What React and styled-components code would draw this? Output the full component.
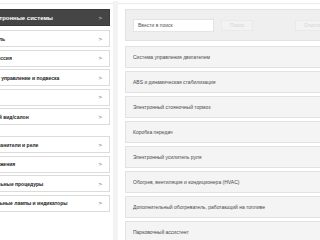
import React from "react";
import styled, { createGlobalStyle } from "styled-components";

const Global = createGlobalStyle`
  html, body { margin: 0; padding: 0; background: #fff; overflow: hidden; }
  body { font-family: "Liberation Sans", Arial, sans-serif; }
`;

const Page = styled.div`
  width: 320px;
  height: 240px;
  overflow: hidden;
  padding-top: 3px;
  box-sizing: border-box;
`;

const TopLine = styled.div`
  height: 1px;
  background: #ececec;
`;

const Body = styled.div`
  display: flex;
  margin-top: 5px;
`;

const LeftCol = styled.div`
  width: 113px;
  flex: none;
  overflow: hidden;
`;

const LeftInner = styled.div`
  margin-left: -28px;
  width: 138px;
  display: flex;
  flex-direction: column;
`;

const Group = styled.div`
  display: flex;
  flex-direction: column;
  gap: 2.5px;
  margin-bottom: ${(p) => p.$mb || 0}px;
`;

const NavItem = styled.div`
  box-sizing: border-box;
  height: 17px;
  display: flex;
  align-items: center;
  justify-content: space-between;
  padding: 0 7px 0 ${(p) => (p.$active ? 12 : 6)}px;
  background: ${(p) => (p.$active ? "#454545" : "#fff")};
  border: 1px solid ${(p) => (p.$active ? "#3a3a3a" : "#dcdcdc")};
  color: ${(p) => (p.$active ? "#fff" : "#222")};
  font-size: ${(p) => (p.$active ? 6 : 5)}px;
  font-weight: bold;
  white-space: nowrap;
  margin-bottom: ${(p) => (p.$active ? 4 : 0)}px;
`;

const Chevron = styled.span`
  font-size: 6px;
  font-weight: normal;
  color: ${(p) => (p.$active ? "#ddd" : "#666")};
`;

const Track = styled.div`
  width: 5px;
  flex: none;
  background: #f3f3f3;
  height: 240px;
  margin-top: -8px;
`;

const RightCol = styled.div`
  flex: none;
  width: 210px;
  margin-left: 7px;
  display: flex;
  flex-direction: column;
`;

const SearchBar = styled.div`
  box-sizing: border-box;
  height: 32px;
  background: #efefef;
  border: 1px solid #e2e2e2;
  border-right: none;
  display: flex;
  align-items: center;
  padding-left: 7px;
  margin-bottom: 5px;
`;

const Input = styled.div`
  box-sizing: border-box;
  width: 83px;
  height: 13px;
  background: #fff;
  border: 1px solid #e4e4e4;
  font-size: 5px;
  color: #555;
  display: flex;
  align-items: center;
  padding-left: 4px;
  margin-right: 7px;
`;

const Btn = styled.div`
  box-sizing: border-box;
  width: ${(p) => p.$w}px;
  height: 11px;
  border: 1px solid #e9e9e9;
  background: #f2f2f2;
  color: #d4d4d4;
  font-size: 5px;
  display: flex;
  align-items: center;
  justify-content: center;
  margin-right: ${(p) => p.$mr || 0}px;
  flex: none;
`;

const List = styled.div`
  display: flex;
  flex-direction: column;
  gap: 3px;
`;

const Row = styled.div`
  box-sizing: border-box;
  height: 22px;
  background: #f4f4f4;
  border: 1px solid #e2e2e2;
  border-right: none;
  display: flex;
  align-items: center;
  padding-left: 7px;
  font-size: 5px;
  color: #4a4a4a;
  white-space: nowrap;
`;

const group1 = [
  "Двигатель",
  "Трансмиссия",
  "Рулевое управление и подвеска",
  "Тормоза",
  "Внешний вид/салон",
];
const group2 = [
  "Предохранители и реле",
  "Расположения",
  "Специальные процедуры",
  "Контрольные лампы и индикаторы",
];
const rows = [
  "Система управления двигателем",
  "ABS и динамическая стабилизация",
  "Электронный стояночный тормоз",
  "Коробка передач",
  "Электронный усилитель руля",
  "Обогрев, вентиляция и кондиционера (HVAC)",
  "Дополнительный обогреватель, работающий на топливе",
  "Парковочный ассистент",
];

export default function App() {
  return (
    <Page>
      <Global />
      <TopLine />
      <Body>
        <LeftCol>
          <LeftInner>
            <NavItem $active>
              Электронные системы <Chevron $active>&gt;</Chevron>
            </NavItem>
            <Group $mb={11}>
              {group1.map((t) => (
                <NavItem key={t}>
                  {t} <Chevron>&gt;</Chevron>
                </NavItem>
              ))}
            </Group>
            <Group>
              {group2.map((t) => (
                <NavItem key={t}>
                  {t} <Chevron>&gt;</Chevron>
                </NavItem>
              ))}
            </Group>
          </LeftInner>
        </LeftCol>
        <Track />
        <RightCol>
          <SearchBar>
            <Input>Ввести в поиск</Input>
            <Btn $w={32} $mr={42}>Поиск</Btn>
            <Btn $w={40}>Очистить</Btn>
          </SearchBar>
          <List>
            {rows.map((t) => (
              <Row key={t}>{t}</Row>
            ))}
          </List>
        </RightCol>
      </Body>
    </Page>
  );
}
